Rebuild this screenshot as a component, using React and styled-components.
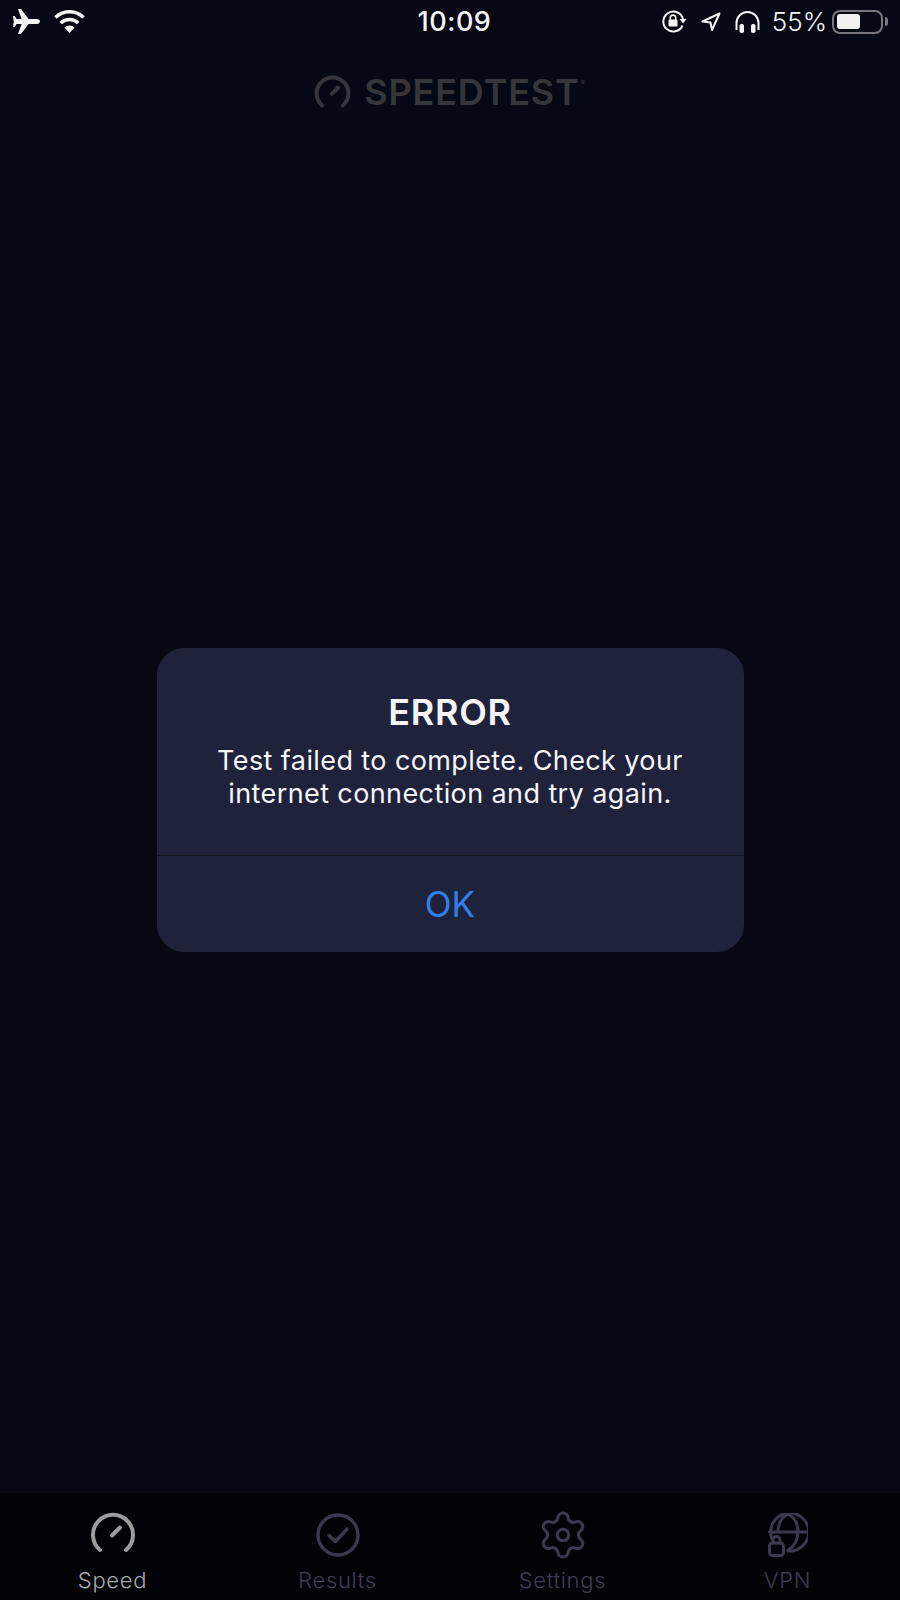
import React from 'react';
import styled, { createGlobalStyle } from 'styled-components';

const GlobalStyle = createGlobalStyle`
  html, body {
    margin: 0;
    padding: 0;
    background: #060814;
  }
  * {
    box-sizing: border-box;
  }
`;

const Page = styled.div`
  position: relative;
  width: 900px;
  height: 1600px;
  display: flex;
  flex-direction: column;
  background: #060814;
  font-family: Inter, "Liberation Sans", sans-serif;
  overflow: hidden;
`;

const StatusBar = styled.div`
  height: 43px;
  display: grid;
  grid-template-columns: 1fr auto 1fr;
  align-items: center;
  padding: 0 11px 0 13px;
  color: #f4f4f6;
`;

const StatusLeft = styled.div`
  display: flex;
  align-items: center;
  gap: 14px;
`;

const StatusRight = styled.div`
  display: flex;
  align-items: center;
  justify-content: flex-end;
  gap: 14px;
`;

const Clock = styled.div`
  font-size: 27px;
  font-weight: 500;
  letter-spacing: 0.5px;
  padding-left: 7px;
`;

const Percent = styled.div`
  font-size: 26px;
  font-weight: 300;
  margin: 0 -9px 0 -2px;
`;

const Battery = styled.div`
  position: relative;
  width: 51px;
  height: 24px;
  border: 2.5px solid #77777d;
  border-radius: 8px;
  padding: 2.5px;
  margin-right: 6px;
  &::after {
    content: '';
    position: absolute;
    right: -7px;
    top: 5px;
    width: 3px;
    height: 9px;
    border-radius: 0 3px 3px 0;
    background: #77777d;
  }
`;

const BatteryFill = styled.div`
  width: ${(p) => p.$level}%;
  height: 100%;
  background: #f1f1f3;
  border-radius: 3px;
`;

const Logo = styled.div`
  display: flex;
  align-items: center;
  justify-content: center;
  gap: 14px;
  padding: 33px 0 0 0;
  color: #35353b;
`;

const LogoText = styled.div`
  font-size: 36px;
  font-weight: 600;
  letter-spacing: 0.85px;
  line-height: 32px;
`;

const LogoMark = styled.span`
  font-size: 6px;
  font-weight: 400;
  letter-spacing: 0;
  line-height: 0;
  vertical-align: 20px;
  margin-left: 1px;
`;

const Content = styled.div`
  flex: 1;
`;

const Overlay = styled.div`
  position: absolute;
  inset: 0;
  display: flex;
  align-items: center;
  justify-content: center;
`;

const Dialog = styled.div`
  width: 587px;
  height: 304px;
  background: #1f223b;
  border-radius: 27px;
  display: flex;
  flex-direction: column;
`;

const DialogBody = styled.div`
  height: 208px;
  padding-top: 44px;
  border-bottom: 1px solid #11121f;
  text-align: center;
  color: #f5f5f7;
`;

const DialogTitle = styled.div`
  font-size: 36px;
  font-weight: 600;
  letter-spacing: 0.7px;
  line-height: 40px;
`;

const DialogText = styled.div`
  font-size: 27px;
  line-height: 33px;
  letter-spacing: 0.4px;
  margin-top: 12px;
`;

const OkButton = styled.button`
  flex: 1;
  border: 0;
  background: none;
  color: #2f7fe8;
  font-family: inherit;
  font-size: 35px;
  padding: 0;
`;

const TabBar = styled.div`
  height: 107px;
  display: grid;
  grid-template-columns: repeat(4, 1fr);
  background: #020209;
`;

const Tab = styled.div`
  display: flex;
  flex-direction: column;
  align-items: center;
  padding-top: 20px;
  color: ${(p) => (p.$active ? '#9c9c9f' : '#3a3a4c')};
`;

const TabIcon = styled.div`
  height: 44px;
  display: flex;
  align-items: flex-start;
  justify-content: center;
`;

const TabLabel = styled.div`
  font-size: 22px;
  font-weight: 300;
  letter-spacing: 0.7px;
  line-height: 26px;
  margin-top: 10px;
  color: ${(p) => (p.$active ? '#a9a9ac' : '#3e3e50')};
`;

const Airplane = () => (
  <svg width="27" height="25" viewBox="13 9 27 25">
    <path
      fill="currentColor"
      d="M40 21.5c0-1.5-1.5-2.5-3-2.5h-8.5L21 9h-3l3.6 10h-5.1L14.8 16H13l.8 5.5L13 27h1.8l1.7-3h5.1L18 34h3l7.5-10H37c1.5 0 3-1 3-2.5Z"
    />
  </svg>
);

const Wifi = () => (
  <svg width="31" height="23" viewBox="54 10 31 23" fill="none" stroke="currentColor" strokeWidth="3.6">
    <path d="M55.5 17.5a20 20 0 0 1 28 0" />
    <path d="M60.8 23a12.5 12.5 0 0 1 17.4 0" />
    <path fill="currentColor" stroke="none" d="M64.5 27.5a7 7 0 0 1 10 0L69.5 33Z" />
  </svg>
);

const RotationLock = () => (
  <svg width="25" height="23" viewBox="0 0 25 23" fill="none" stroke="currentColor">
    <path strokeWidth="2" d="M20.5 15.5A10 10 0 1 1 21 9" />
    <path fill="currentColor" stroke="none" d="M17.5 9h7l-3.5 4.5Z" />
    <rect x="6.5" y="9.5" width="9" height="7" rx="1.2" fill="currentColor" stroke="none" />
    <path strokeWidth="1.6" d="M8.3 10V7.8a2.7 2.7 0 0 1 5.4 0V10" />
  </svg>
);

const LocationArrow = () => (
  <svg width="20" height="20" viewBox="0 0 20 20" fill="none" stroke="currentColor" strokeWidth="2" strokeLinejoin="round">
    <path d="M18.5 1.5 1.5 9.5l8 1 1.5 7.5Z" />
  </svg>
);

const Headphones = () => (
  <svg width="25" height="22" viewBox="0 0 25 22" fill="none" stroke="currentColor" strokeWidth="2">
    <path d="M1.5 19v-7a11 11 0 0 1 22 0v7" />
    <rect x="4.5" y="13" width="4.5" height="9" rx="1.8" fill="currentColor" stroke="none" />
    <rect x="16" y="13" width="4.5" height="9" rx="1.8" fill="currentColor" stroke="none" />
  </svg>
);

const Gauge = ({ size = 44, stroke = 4 }) => (
  <svg width={size} height={(size * 39) / 44} viewBox="0 0 44 39" fill="none" stroke="currentColor" strokeWidth={stroke} strokeLinecap="round" overflow="visible">
    <path d="M9 37a20 20 0 1 1 26 0" />
    <path d="M21 22.5l8-8" />
  </svg>
);

const ResultsIcon = () => (
  <svg width="44" height="44" viewBox="0 0 44 44" fill="none" stroke="currentColor" strokeWidth="3.4" strokeLinecap="round" strokeLinejoin="round">
    <circle cx="22" cy="22" r="20" />
    <path d="M13 22.5l6.5 6L31 16" />
  </svg>
);

const SettingsIcon = () => (
  <svg width="44" height="44" viewBox="2 2 20 20" fill="none" stroke="currentColor" strokeWidth="1.4" overflow="visible">
    <path d="M9.671 4.136a2.34 2.34 0 0 1 4.659 0 2.34 2.34 0 0 0 3.319 1.915 2.34 2.34 0 0 1 2.33 4.033 2.34 2.34 0 0 0 0 3.831 2.34 2.34 0 0 1-2.33 4.033 2.34 2.34 0 0 0-3.319 1.915 2.34 2.34 0 0 1-4.659 0 2.34 2.34 0 0 0-3.32-1.915 2.34 2.34 0 0 1-2.33-4.033 2.34 2.34 0 0 0 0-3.831A2.34 2.34 0 0 1 6.35 6.051a2.34 2.34 0 0 0 3.32-1.915" />
    <circle cx="12" cy="12" r="2.6" />
  </svg>
);

const VpnIcon = () => (
  <svg width="40" height="44" viewBox="0 0 40 44" fill="none" stroke="currentColor" strokeWidth="3" strokeLinecap="round">
    <path d="M4 26A19 19 0 1 1 20 38" />
    <path d="M1.5 19h37" />
    <path d="M10 19C10 10 14 4 20 1c6 3 10 9 10 18 0 8-4 15-10 18" />
    <rect x="1.5" y="30" width="14" height="12.5" rx="3" />
    <path d="M5 30v-3a3.5 3.5 0 0 1 7 0v3" />
  </svg>
);

const tabs = [
  { label: 'Speed', icon: <Gauge />, active: true },
  { label: 'Results', icon: <ResultsIcon /> },
  { label: 'Settings', icon: <SettingsIcon /> },
  { label: 'VPN', icon: <VpnIcon /> },
];

function App() {
  return (
    <Page>
      <GlobalStyle />
      <StatusBar>
        <StatusLeft>
          <Airplane />
          <Wifi />
        </StatusLeft>
        <Clock>10:09</Clock>
        <StatusRight>
          <RotationLock />
          <LocationArrow />
          <Headphones />
          <Percent>55%</Percent>
          <Battery>
            <BatteryFill $level={55} />
          </Battery>
        </StatusRight>
      </StatusBar>
      <Logo>
        <Gauge size={35} stroke={5} />
        <LogoText>
          SPEEDTEST<LogoMark>®</LogoMark>
        </LogoText>
      </Logo>
      <Content />
      <TabBar>
        {tabs.map((tab) => (
          <Tab key={tab.label} $active={tab.active}>
            <TabIcon>{tab.icon}</TabIcon>
            <TabLabel $active={tab.active}>{tab.label}</TabLabel>
          </Tab>
        ))}
      </TabBar>
      <Overlay>
        <Dialog>
          <DialogBody>
            <DialogTitle>ERROR</DialogTitle>
            <DialogText>
              Test failed to complete. Check your
              <br />
              internet connection and try again.
            </DialogText>
          </DialogBody>
          <OkButton>OK</OkButton>
        </Dialog>
      </Overlay>
    </Page>
  );
}

export default App;
